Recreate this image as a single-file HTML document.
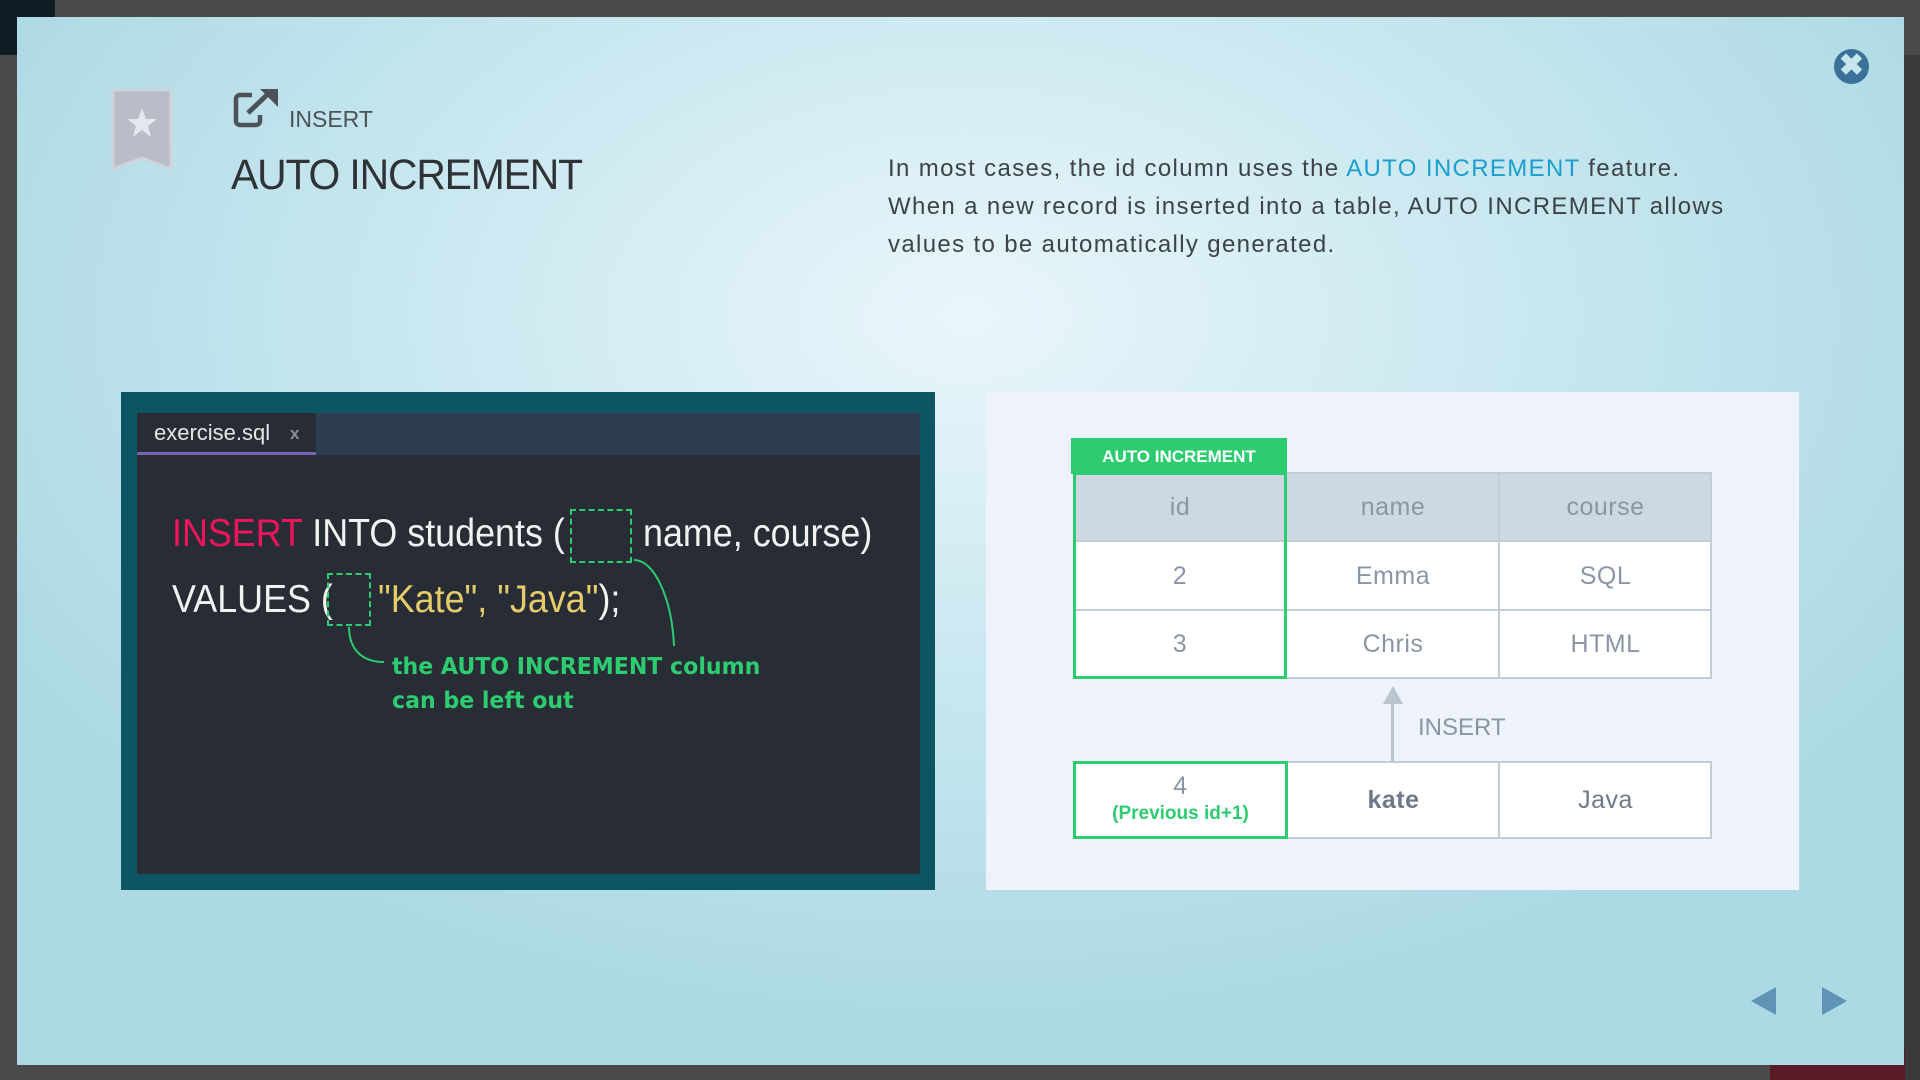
<!DOCTYPE html>
<html><head><meta charset="utf-8"><style>
*{margin:0;padding:0;box-sizing:border-box}
body{width:1920px;height:1080px;overflow:hidden;background:#4a4a4a;font-family:"Liberation Sans",sans-serif;position:relative}
.abs{position:absolute}
#modal{left:17px;top:17px;width:1887px;height:1048px;background:radial-gradient(ellipse 1100px 700px at 950px 300px,#e9f6fb 0%,#cde9f1 45%,#acd9e4 100%)}
.code{font-family:"Liberation Sans Narrow","Liberation Sans",sans-serif;font-size:39px;color:#f2f2f2;white-space:nowrap;line-height:1;transform:scaleX(0.92);transform-origin:0 0}
.cell{position:absolute;display:flex;align-items:center;justify-content:center;font-size:25px;color:#8a96a6;letter-spacing:.5px}
</style></head><body>
<div class="abs" style="left:0;top:0;width:55px;height:55px;background:#0f1c24"></div>
<div class="abs" style="left:1904px;top:55px;width:16px;height:1025px;background:#3a3a3a"></div>
<div class="abs" style="left:1770px;top:1050px;width:135px;height:30px;background:#5a1a26"></div>
<div id="modal" class="abs">
</div>
<svg class="abs" style="left:111px;top:88px" width="62" height="84" viewBox="0 0 62 84">
<path d="M2 2H60V81L31 70L2 81Z" fill="#b8bdc8" stroke="#cfd3db" stroke-width="3"/>
<path d="M31 20L35 31H46L37 38L40 49L31 42L22 49L25 38L16 31H27Z" fill="#e4e7ee"/>
</svg>
<svg class="abs" style="left:232px;top:87px" width="50" height="42" viewBox="0 0 50 42">
<path d="M20 8H8A4 4 0 0 0 4 12V34A4 4 0 0 0 8 38H24A4 4 0 0 0 28 34V28" fill="none" stroke="#4d5258" stroke-width="4.5"/>
<path d="M16 26L38 5" stroke="#4d5258" stroke-width="5"/>
<path d="M28 2H46V20Z" fill="#4d5258"/>
</svg>
<div class="abs" style="left:289px;top:106px;font-size:23px;color:#4d5258">INSERT</div>
<div class="abs" style="left:231px;top:151px;font-size:43px;color:#2f3336;letter-spacing:-1.2px;transform:scaleX(0.95);transform-origin:0 0">AUTO INCREMENT</div>
<div class="abs" style="left:888px;top:150px;font-size:24px;line-height:38px;color:#3d4347;letter-spacing:1.35px;width:950px">In most cases, the id column uses the <span style="color:#1a9fd0">AUTO INCREMENT</span> feature.<br>When a new record is inserted into a table, AUTO INCREMENT allows<br>values to be automatically generated.</div>
<div class="abs" style="left:1834px;top:49px;width:35px;height:35px;border-radius:50%;background:#3a7199"></div>
<div class="abs" style="left:1837px;top:47px;width:29px;text-align:center;font-size:30px;font-weight:bold;color:#c6e5ee;line-height:38px">✖</div>
<div class="abs" style="left:121px;top:392px;width:814px;height:498px;background:#0d5563"></div>
<div class="abs" style="left:137px;top:413px;width:783px;height:461px;background:#282d35"></div>
<div class="abs" style="left:137px;top:413px;width:783px;height:42px;background:#2c3d4f"></div>
<div class="abs" style="left:137px;top:413px;width:179px;height:42px;background:#282d35;border-bottom:3px solid #7b5fb5"></div>
<div class="abs" style="left:154px;top:420px;font-size:22px;color:#e6e6e6">exercise.sql</div>
<div class="abs" style="left:290px;top:424px;font-size:17px;color:#8a8f97;font-weight:bold">x</div>
<div class="abs code" style="left:172px;top:514px"><span style="color:#f0145a">INSERT</span> INTO students (</div>
<div class="abs code" style="left:643px;top:514px">name, course)</div>
<div class="abs code" style="left:172px;top:580px">VALUES (</div>
<div class="abs code" style="left:378px;top:580px;color:#e5cc6b">"Kate", "Java"<span style="color:#f2f2f2">);</span></div>
<div class="abs" style="left:570px;top:509px;width:62px;height:54px;border:2px dashed #2ecc71"></div>
<div class="abs" style="left:327px;top:573px;width:44px;height:53px;border:2px dashed #2ecc71"></div>
<svg class="abs" style="left:0;top:0" width="1920" height="1080">
<path d="M634 560C655 560 672 600 674 646" fill="none" stroke="#2ecc71" stroke-width="2"/>
<path d="M349 627C349 645 358 662 384 662" fill="none" stroke="#2ecc71" stroke-width="2"/>
</svg>
<div class="abs" style="left:392px;top:650px;font-family:'Comic Sans MS','DejaVu Sans',sans-serif;font-weight:bold;font-size:23px;line-height:34px;color:#2ecc71;transform:scaleX(0.96);transform-origin:0 0">the AUTO INCREMENT column<br>can be left out</div>
<div class="abs" style="left:986px;top:392px;width:813px;height:498px;background:#eef3fb"></div>
<div class="abs" style="left:1071px;top:438px;width:216px;height:36px;background:#2ecc71;color:#fff;font-weight:bold;font-size:17px;text-align:center;line-height:38px">AUTO INCREMENT</div>
<div class="abs" style="left:1073px;top:472px;width:639px;height:207px;border:2px solid #c3cdd8;background:#fff"></div>
<div class="abs" style="left:1073px;top:472px;width:639px;height:70px;background:#cdd8e2;border:2px solid #c3cdd8"></div>
<div class="abs" style="left:1073px;top:609px;width:639px;height:2px;background:#c3cdd8"></div>
<div class="abs" style="left:1498px;top:472px;width:2px;height:207px;background:#c3cdd8"></div>
<div class="abs" style="left:1285px;top:472px;width:2px;height:207px;background:#c3cdd8"></div>
<div class="abs" style="left:1073px;top:472px;width:214px;height:207px;border:3px solid #2ecc71"></div>
<div class="cell" style="left:1073px;top:472px;width:214px;height:70px">id</div>
<div class="cell" style="left:1287px;top:472px;width:212px;height:70px">name</div>
<div class="cell" style="left:1499px;top:472px;width:213px;height:70px">course</div>
<div class="cell" style="left:1073px;top:542px;width:214px;height:68px">2</div>
<div class="cell" style="left:1287px;top:542px;width:212px;height:68px">Emma</div>
<div class="cell" style="left:1499px;top:542px;width:213px;height:68px">SQL</div>
<div class="cell" style="left:1073px;top:610px;width:214px;height:68px">3</div>
<div class="cell" style="left:1287px;top:610px;width:212px;height:68px">Chris</div>
<div class="cell" style="left:1499px;top:610px;width:213px;height:68px">HTML</div>
<div class="abs" style="left:1391px;top:700px;width:3px;height:62px;background:#b9c4d0"></div>
<div class="abs" style="left:1383px;top:686px;width:0;height:0;border-left:10px solid transparent;border-right:10px solid transparent;border-bottom:18px solid #b9c4d0"></div>
<div class="abs" style="left:1418px;top:714px;font-size:24px;color:#8a96a6">INSERT</div>
<div class="abs" style="left:1073px;top:761px;width:639px;height:78px;border:2px solid #c3cdd8;background:#fff"></div>
<div class="abs" style="left:1498px;top:761px;width:2px;height:78px;background:#c3cdd8"></div>
<div class="abs" style="left:1073px;top:761px;width:215px;height:78px;border:3px solid #2ecc71"></div>
<div class="cell" style="left:1073px;top:771px;width:215px;height:30px">4</div>
<div class="cell" style="left:1073px;top:801px;width:215px;height:26px;font-size:19px;font-weight:bold;color:#2ecc71;letter-spacing:0">(Previous id+1)</div>
<div class="cell" style="left:1288px;top:761px;width:211px;height:78px;color:#6d7989;font-weight:bold">kate</div>
<div class="cell" style="left:1499px;top:761px;width:213px;height:78px;color:#6d7989">Java</div>
<div class="abs" style="left:1751px;top:987px;width:0;height:0;border-top:14px solid transparent;border-bottom:14px solid transparent;border-right:25px solid #6094b4"></div>
<div class="abs" style="left:1822px;top:987px;width:0;height:0;border-top:14px solid transparent;border-bottom:14px solid transparent;border-left:25px solid #6094b4"></div>
</body></html>
